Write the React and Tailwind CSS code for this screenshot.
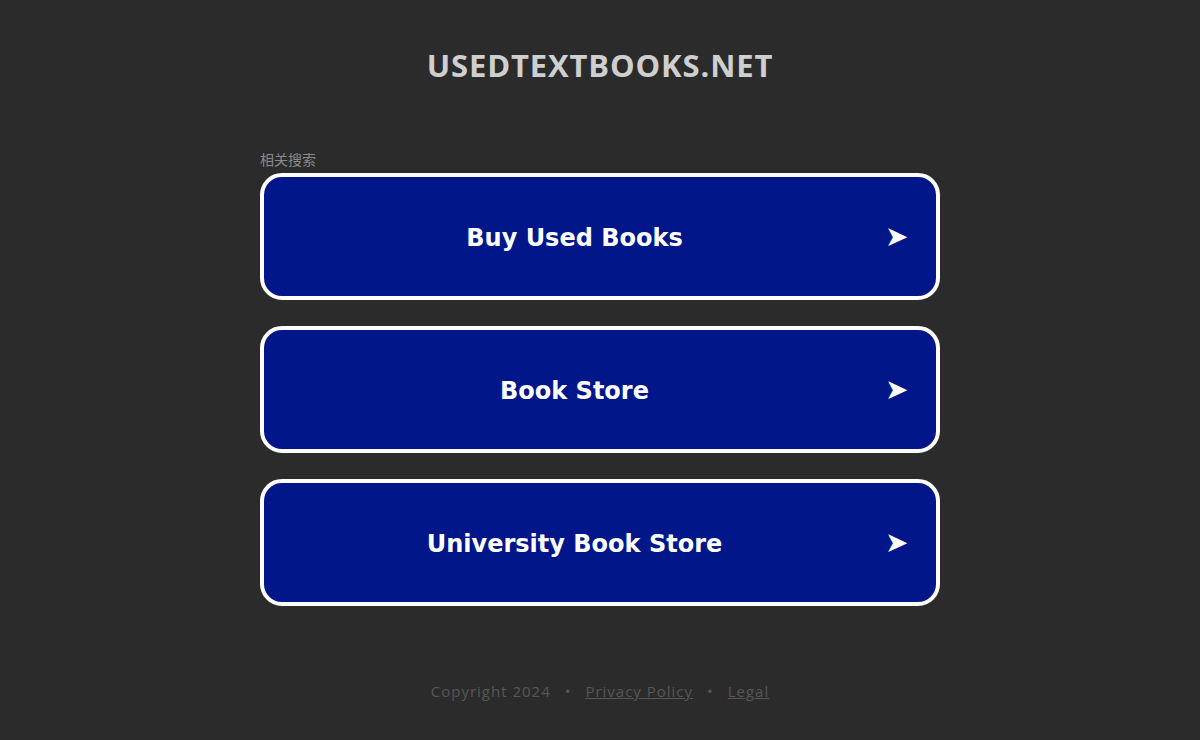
import React from "react";

const items = ["Buy Used Books", "Book Store", "University Book Store"];

export default function App() {
  return (
    <div className="min-h-[740px] w-full bg-[#2b2b2b] flex flex-col items-center">
      <h1 className="mt-[45px] text-[31px] leading-[40px] font-bold text-[#cfcfcf] tracking-[0.85px] [font-family:'Open_Sans',sans-serif]">
        USEDTEXTBOOKS.NET
      </h1>
      <div className="mt-[65px] w-[680px] flex flex-col">
        <div className="text-[14px] leading-[18px] text-[#8a8a8a] [font-family:'Noto_Sans_CJK_SC',sans-serif]">
          相关搜索
        </div>
        <div className="mt-[5px] flex flex-col gap-[26px]">
          {items.map((t) => (
            <a
              key={t}
              href="#"
              className="h-[127px] rounded-[22px] border-4 border-white bg-[#001689] flex items-center pr-[31px] text-white"
            >
              <span className="flex-1 pt-[2px] text-center text-[24px] font-bold [font-family:'DejaVu_Sans',Verdana,sans-serif]">
                {t}
              </span>
              <span className="w-[20px] text-[28px] leading-none [font-family:'DejaVu_Sans',sans-serif]">➤</span>
            </a>
          ))}
        </div>
      </div>
      <div className="mt-[74px] flex items-center gap-[14px] text-[15px] tracking-[1px] text-[#575757] [font-family:'Open_Sans',sans-serif]">
        <span>Copyright 2024</span>
        <span>•</span>
        <a href="#" className="underline">Privacy Policy</a>
        <span>•</span>
        <a href="#" className="underline">Legal</a>
      </div>
    </div>
  );
}
